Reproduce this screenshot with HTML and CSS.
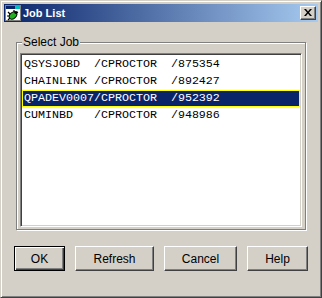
FILE: index.html
```html
<!DOCTYPE html>
<html lang="en">
<head>
    <meta charset="UTF-8">
    <meta name="viewport" content="width=device-width, initial-scale=1.0">
    <title>Job List</title>
    <link rel="stylesheet" href="styles.css">
</head>
<body>
    <div class="window">
        <div class="titlebar">
            <svg class="app-icon" width="16" height="16" viewBox="0 0 16 16">
                <rect x="0.5" y="0.5" width="15" height="15" fill="#fff" stroke="#808080"/>
                <rect x="1" y="1" width="14" height="3" fill="#0a246a"/>
                <rect x="10" y="1" width="5" height="3" fill="#00c0c0"/>
                <path d="M3 7 L5 9 M2 11 L4 11 M3 15 L5 13 M9 5 L9 7 M13 7 L11 8" stroke="#000" stroke-width="1.2"/>
                <ellipse cx="8" cy="10.5" rx="4.2" ry="3" transform="rotate(-40 8 10.5)" fill="#20b020" stroke="#000"/>
                <circle cx="11" cy="7.5" r="1.6" fill="#000"/>
            </svg>
            <span class="title">Job List</span>
            <button class="close">
                <svg width="8" height="7" viewBox="0 0 8 7">
                    <path d="M0 0h2l2 2.5L6 0h2L5 3.5 8 7H6L4 4.5 2 7H0l3-3.5z" fill="#000"/>
                </svg>
            </button>
        </div>
        <div class="content">
            <fieldset class="group">
                <legend>Select Job</legend>
                <ul class="job-list">
                    <li>QSYSJOBD  /CPROCTOR  /875354</li>
                    <li>CHAINLINK /CPROCTOR  /892427</li>
                    <li class="selected">QPADEV0007/CPROCTOR  /952392</li>
                    <li>CUMINBD   /CPROCTOR  /948986</li>
                </ul>
            </fieldset>
            <div class="buttons">
                <button class="btn btn-default btn-ok">OK</button>
                <button class="btn btn-refresh">Refresh</button>
                <button class="btn btn-cancel">Cancel</button>
                <button class="btn btn-help">Help</button>
            </div>
        </div>
    </div>
</body>
</html>
```

FILE: styles.css
```css
*{
    box-sizing: border-box;
    margin: 0;
    padding: 0;
}
body{
    width: 322px;
    height: 298px;
    background: #d4d0c8;
    font-family: "Liberation Sans", Arial, sans-serif;
    font-size: 12px;
    overflow: hidden;
}
.window{
    width: 322px;
    height: 298px;
    background: #d4d0c8;
    border: 1px solid;
    border-color: #d4d0c8 #404040 #404040 #d4d0c8;
    box-shadow: inset 1px 1px 0 #fff, inset -1px -1px 0 #808080;
    padding: 3px;
}
.titlebar{
    height: 18px;
    display: flex;
    align-items: center;
    background: linear-gradient(to right, #0a246a, #a6caf0);
    color: #fff;
}
.app-icon{
    margin-left: 1px;
    flex: none;
}
.title{
    margin-left: 2px;
    font-weight: bold;
    font-size: 11px;
    line-height: 18px;
}
.close{
    margin-left: auto;
    margin-right: 2px;
    width: 16px;
    height: 14px;
    background: #d4d0c8;
    border: 1px solid;
    border-color: #fff #404040 #404040 #fff;
    box-shadow: inset -1px -1px 0 #808080;
    display: flex;
    align-items: center;
    justify-content: center;
    padding: 0 1px 1px 0;
}
.close svg{
    display: block;
}
.group{
    margin: 13px 12px 0;
    border: 1px solid #808080;
    box-shadow: 1px 1px 0 #fff, inset 1px 1px 0 #fff;
    padding: 3px 3px 2px;
}
.group legend{
    margin-left: 2px;
    padding: 0 1px;
    line-height: 15px;
    font-size: 12px;
    color: #000;
    background: #d4d0c8;
}
.job-list{
    list-style: none;
    height: 174px;
    background: #fff;
    border: 1px solid;
    border-color: #808080 #fff #fff #808080;
    box-shadow: inset 1px 1px 0 #404040, inset -1px -1px 0 #d4d0c8;
    padding: 2px 1px 1px 1px;
}
.job-list li{
    height: 17px;
    line-height: 15px;
    border: 1px solid transparent;
    padding: 0 1px;
    font-family: "Liberation Mono", "Courier New", monospace;
    font-size: 11.67px;
    white-space: pre;
    color: #000;
}
.job-list li.selected{
    background: #0a246a;
    color: #fff;
    border-color: #ffff00;
}
.buttons{
    display: flex;
    gap: 10px;
    margin-top: 16px;
    padding-left: 10px;
}
.btn{
    height: 25px;
    background: #d4d0c8;
    border: 1px solid;
    border-color: #fff #404040 #404040 #fff;
    box-shadow: inset -1px -1px 0 #808080;
    font-family: "Liberation Sans", Arial, sans-serif;
    font-size: 12px;
    color: #000;
}
.btn-default{
    border-color: #000;
    box-shadow: inset 1px 1px 0 #fff, inset -1px -1px 0 #404040, inset -2px -2px 0 #808080;
}
.btn-ok{ width: 51px; }
.btn-refresh{ width: 79px; }
.btn-cancel{ width: 73px; }
.btn-help{ width: 61px; }
```
